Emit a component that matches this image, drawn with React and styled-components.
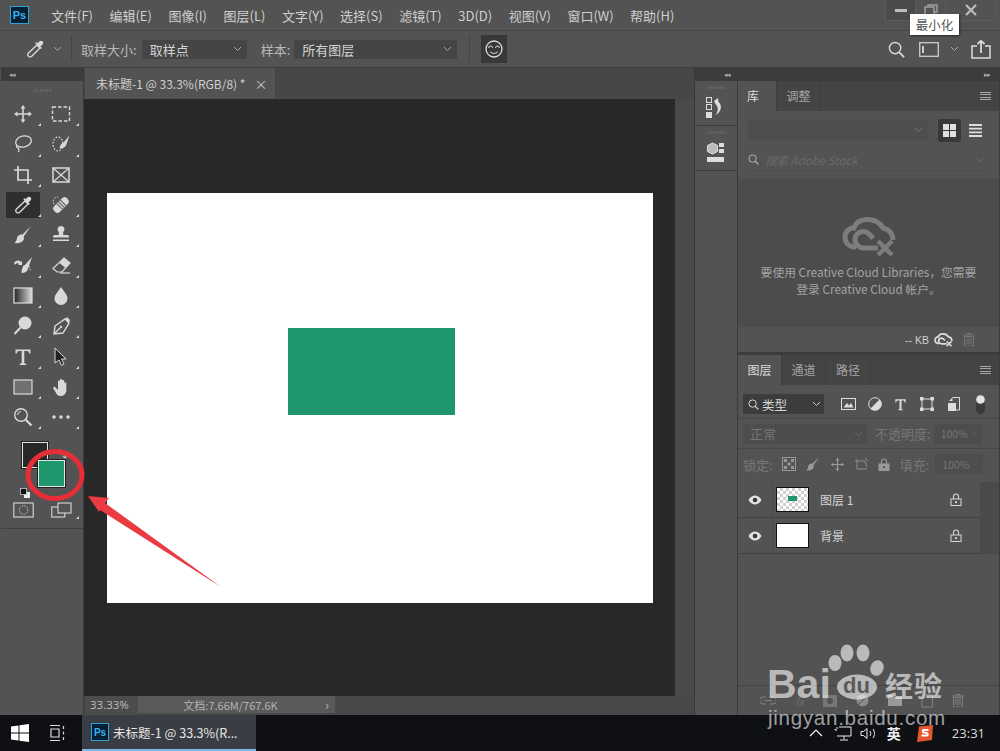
import React from 'react';
import styled, { createGlobalStyle } from 'styled-components';

const CJK = '"Noto Sans CJK SC", "Noto Sans", sans-serif';

const Global = createGlobalStyle`
  html, body { margin: 0; padding: 0; width: 1000px; height: 751px; overflow: hidden; background: #535353; }
  #root { width: 1000px; height: 751px; }
  * { box-sizing: border-box; }
`;

const Page = styled.div`
  position: relative; width: 1000px; height: 751px; display: flex; flex-direction: column;
  font-family: ${CJK}; color: #d6d6d6; overflow: hidden; background: #535353;
`;

/* ---------- title / menu ---------- */
const MenuBar = styled.header`
  height: 31px; flex: none; display: flex; align-items: center; background: #535353; padding-left: 10px;
  border-bottom: 1px solid #444;
`;
const PsLogo = styled.div`
  width: ${p => p.$s || 19}px; height: ${p => p.$s || 18}px; flex: none; display: flex; align-items: center; justify-content: center;
  background: #071f33; border: 1.5px solid #2fa3d8; color: #35b3ee; font: 700 ${p => p.$f || 11}px "Liberation Sans", sans-serif;
`;
const Menu = styled.nav`
  display: flex; gap: 16.5px; margin-left: 22px; font-size: 13px; color: #cfcfcf; white-space: nowrap;
`;
const WinControls = styled.div`
  margin-left: auto; margin-right: 4px; align-self: flex-start; display: flex; height: 21px;
`;
const WinBtn = styled.div`
  width: ${p => p.$w || 31}px; height: 21px; display: flex; align-items: center; justify-content: center;
  border: 1px solid #5c5c5c; border-top: 0; margin-left: -1px; background: ${p => p.$hover ? '#4a4a4a' : 'transparent'};
  border-radius: 0 0 3px 3px;
`;
const Tooltip = styled.div`
  position: absolute; left: 910px; top: 14px; width: 49px; height: 21px; background: #fff; color: #555;
  font-size: 12.5px; display: flex; align-items: center; justify-content: center; box-shadow: 1px 1px 2px rgba(0,0,0,.5);
`;

/* ---------- options ---------- */
const OptionsBar = styled.div`
  height: 37px; flex: none; display: flex; align-items: center; background: #535353; border-bottom: 1px solid #3e3e3e;
  font-size: 13px; color: #b9b9b9; padding-left: 25px;
`;
const Divider = styled.span`
  width: 1px; height: 26px; background: #444; margin: ${p => p.$m};
`;
const OptLabel = styled.span`margin: ${p => p.$m}; white-space: nowrap;`;
const OptSelect = styled.div`
  width: ${p => p.$w}px; height: 19px; margin: ${p => p.$m || 0}; background: #454545; color: #d4d4d4;
  display: flex; align-items: center; justify-content: space-between; padding: 0 5px 0 8px; font-size: 13px;
`;
const FaceBtn = styled.div`
  width: 26px; height: 28px; margin-left: 11px; background: #383838; display: flex; align-items: center; justify-content: center;
`;
const OptRight = styled.div`
  margin-left: auto; margin-right: 11px; display: flex; align-items: center; gap: 0;
`;

/* ---------- work area ---------- */
const Work = styled.div`flex: 1; display: flex; min-height: 0;`;

const ToolColumn = styled.aside`
  width: 84px; flex: none; background: #535353; border-right: 1px solid #3a3a3a; display: flex; flex-direction: column; padding-left: 1px;
`;
const StripHead = styled.div`
  height: 13px; flex: none; background: #3c3c3c; color: #aaa; font-size: 7px; line-height: 13px; letter-spacing: -1px;
  padding: ${p => p.$p || '0 0 0 8px'}; text-align: ${p => p.$a || 'left'};
  display: flex; justify-content: ${p => p.$j || 'flex-start'}; align-items: center;
`;
const Grip = styled.div`
  height: ${p => p.$h || 18}px; flex: none; display: flex; align-items: center; justify-content: center; gap: 1px;
  & > i { width: 2px; height: 3px; background: #626262; display: block; }
`;
const ToolGrid = styled.div`
  display: grid; grid-template-columns: 38px 38px; grid-auto-rows: 30.3px; padding-left: 3px; column-gap: 0;
`;
const Tool = styled.div`
  position: relative; display: flex; align-items: center; justify-content: center;
  margin: 2px 2px; border-radius: 1px;
  background: ${p => p.$active ? '#2f2f2f' : 'transparent'};
  &::after {
    content: ''; display: ${p => p.$plain ? 'none' : 'block'}; position: absolute; right: -1px; bottom: 1px; width: 0; height: 0;
    border-left: 3px solid transparent; border-bottom: 3px solid #d8d8d8;
  }
`;
const Swatches = styled.div`
  position: relative; height: 56px; margin-top: 7px; flex: none;
`;
const Swatch = styled.div`
  position: absolute; left: ${p => p.$x}px; top: ${p => p.$y}px; width: ${p => p.$s}px; height: ${p => p.$s}px;
  background: ${p => p.$c}; border: 1px solid #e4e4e4; outline: 1px solid #222;
`;
const SwapIcon = styled.div`position: absolute; left: 56px; top: 2px;`;
const MiniDefault = styled.div`position: absolute; left: 19px; top: 41px;`;
const BottomTools = styled.div`
  display: grid; grid-template-columns: 38px 38px; padding: 2px 0 6px 3px; border-bottom: 1px solid #414141; flex: none;
  height: 34px;
`;

const DocArea = styled.main`
  width: 610px; flex: none; display: flex; flex-direction: column; background: #484848;
`;
const TabStrip = styled.div`
  height: 31px; flex: none; background: #474747; display: flex; padding-left: 1px;
`;
const DocTab = styled.div`
  width: 190px; background: #535353; display: flex; align-items: center; padding-left: 11px; font-size: 12px; color: #cfcfcf; gap: 9px; white-space: nowrap;
  & > b { font-weight: 400; font-size: 13px; color: #c4c4c4; }
`;
const CanvasRow = styled.div`flex: 1; display: flex; min-height: 0;`;
const Pasteboard = styled.div`
  width: 591px; flex: none; background: #282828; display: flex; align-items: center; justify-content: center;
`;
const Sheet = styled.div`
  width: 546px; height: 410px; background: #fff; padding: 135px 0 0 181px;
`;
const GreenRect = styled.div`
  width: 167px; height: 87px; background: #1f976d;
`;
const VScroll = styled.div`flex: 1; background: #4a4a4a;`;
const StatusBar = styled.div`
  height: 19px; flex: none; display: flex; font-size: 11px; color: #bcbcbc; background: #484848; padding-left: 1px;
`;
const ZoomBox = styled.div`width: 53px; padding-left: 5px; line-height: 17px; font-size: 11.5px; font-family: "Open Sans", "Liberation Sans", sans-serif; background: #4c4c4c;`;
const DocInfo = styled.div`
  width: 197px; background: #5a5a5a; display: flex; align-items: center; position: relative; justify-content: center; padding-right: 12px; height: 17px;
  font-size: 11px; color: #b4b4b4;
`;
const InfoCaret = styled.span`position: absolute; right: 6px; top: -1px; font-size: 13px; color: #b5b5b5;`;

const DockStrip = styled.div`
  width: 44px; flex: none; background: #3c3c3c; display: flex; flex-direction: column; border-left: 1px solid #383838;
`;
const DockCell = styled.div`
  height: 44px; flex: none; background: #535353; margin-bottom: 1px; display: flex; flex-direction: column; align-items: center; border-right: 1px solid #3a3a3a;
`;
const DockRest = styled.div`flex: 1; background: #535353; border-right: 1px solid #3a3a3a;`;

const RightCol = styled.div`
  flex: 1; display: flex; flex-direction: column; background: #3c3c3c; min-width: 0; padding-right: 1px;
`;
const Panel = styled.section`
  background: #535353; display: flex; flex-direction: column; height: ${p => p.$h}px; flex: ${p => p.$h ? 'none' : 1}; margin-bottom: ${p => p.$mb || 0}px; position: relative;
`;
const TabsRow = styled.div`
  height: 30px; flex: none; background: #444; display: flex; align-items: center; font-size: 12px; color: #a4a4a4; position: relative;
`;
const PanelTab = styled.div`
  width: ${p => p.$w}px; height: 100%; display: flex; align-items: center; justify-content: center; padding: 0 ${p => p.$pr || 0}px 2px 0;
  background: ${p => p.$on ? '#535353' : 'transparent'}; color: ${p => p.$on ? '#dcdcdc' : '#a4a4a4'};
  border-right: 1px solid #3f3f3f;
`;
const PanelMenu = styled.div`
  margin-left: auto; margin-right: 8px; width: 11px; height: 8px;
  background: repeating-linear-gradient(#a8a8a8 0 1px, transparent 1px 2.3px);
`;
const LibTop = styled.div`display: flex; align-items: center; height: 31px; padding: 7px 0 0 10px; flex: none;`;
const LibSelect = styled.div`
  width: 180px; height: 20px; background: #4e4e4e; border-radius: 2px; display: flex; align-items: center; justify-content: flex-end; padding-right: 5px;
`;
const ViewBtn = styled.div`
  width: 23px; height: 23px; margin-left: 10px; background: #383838; border-radius: 2px; display: flex; align-items: center; justify-content: center;
`;
const ListBtn = styled.div`margin-left: 8px; display: flex;`;
const LibSearch = styled.div`
  margin: 7px 10px 0 10px; height: 22px; border-bottom: 1px solid #4c4c4c; display: flex; align-items: center; gap: 6px; flex: none;
  font-size: 11.5px; font-style: italic; color: #6a6a6a; padding-right: 4px;
`;
const LibEmpty = styled.div`
  flex: 1; display: flex; flex-direction: column; align-items: center; padding-top: 38px; font-size: 11.8px; line-height: 16.5px; color: #a3a3a3; text-align: center; background: #4c4c4c;
  margin: 8px 0 0;
`;
const EmptyLine = styled.div`margin-top: ${p => p.$mt || 0}px;`;
const LibFoot = styled.div`
  height: 25px; flex: none; display: flex; align-items: center; justify-content: flex-end; gap: 5px; padding-right: 24px; font-size: 10.5px; color: #d0d0d0; background: #535353;
  font-family: "Liberation Sans", sans-serif;
`;
const FilterRow = styled.div`
  display: flex; align-items: flex-start; height: 33px; padding: 9px 0 0 5px; flex: none;
`;
const KindSelect = styled.div`
  width: 81px; height: 20px; background: #3c3c3c; display: flex; align-items: center; gap: 3px; padding: 0 3px 0 5px; font-size: 12.5px; color: #d6d6d6; justify-content: flex-start;
`;
const FilterIcons = styled.div`display: flex; margin-left: 11px; align-items: center; height: 20px;`;
const FilterSlot = styled.div`width: 26.4px; display: flex; justify-content: center; align-items: center;`;
const Rule = styled.div`height: 1px; background: #484848; flex: none;`;
const ModeRow = styled.div`
  display: flex; align-items: center; height: 29px; padding-left: 5px; font-size: 13px; color: #767676; flex: none;
`;
const DimSelect = styled.div`
  width: ${p => p.$w}px; height: 20px; background: #4d4d4d; display: flex; align-items: center; justify-content: space-between; padding: 0 4px 0 7px; margin-left: ${p => p.$ml || 0}px; font-size: ${p => p.$f || 13}px; flex: none;
`;
const LockRow = styled(ModeRow)`height: 33px; padding-bottom: 3px;`;
const LockIcons = styled.div`display: flex; gap: 9px; margin-left: 9px; align-items: center;`;
const LayerList = styled.div`flex: 1; display: flex; flex-direction: column; background: #535353;`;
const LayerGroup = styled.div`background: #4b4b4b; flex: none;`;
const LayerRow = styled.div`
  height: 36px; flex: none; width: 242px; display: flex; align-items: center; background: #535353; border-bottom: 1px solid #434343;
  font-size: 12px; color: #d4d4d4; position: relative;
`;
const EyeCell = styled.div`
  width: 35px; height: 100%; display: flex; align-items: center; justify-content: center; border-right: 1px solid #484848;
`;
const Thumb = styled.div`
  width: 33px; height: 25px; margin-left: 3px; border: 1px solid #111; display: flex; align-items: center; justify-content: center;
  background: ${p => p.$check ? 'repeating-conic-gradient(#d0d0d0 0 25%, #fff 0 50%) 0 0 / 6px 6px' : '#fff'};
`;
const ThumbMark = styled.div`width: 9px; height: 5px; background: #1f976d; margin-top: -2px;`;
const LayerName = styled.div`margin-left: 11px;`;
const LayerLock = styled.div`margin-left: auto; margin-right: 18px; display: flex;`;
const LayersFoot = styled.div`
  height: 30px; flex: none; background: #535353; border-top: 1px solid #444; display: flex; align-items: center; justify-content: flex-end; padding-right: 35px; gap: 19px; color: #6e6e6e; font-size: 11px;
`;

/* ---------- taskbar ---------- */
const Taskbar = styled.footer`
  height: 36px; flex: none; background: #0e1014; display: flex; align-items: center; position: relative;
`;
const WinStart = styled.div`width: 40px; display: flex; justify-content: center;`;
const TaskView = styled.div`width: 36px; display: flex; justify-content: center; margin-right: 6px;`;
const TaskApp = styled.div`
  width: 174px; height: 36px; background: #3a3e44; border-bottom: 2px solid #76b9ed; display: flex; align-items: center; gap: 4px; padding-left: 9px; font-size: 12.5px; color: #e6e6e6; white-space: nowrap;
`;
const Tray = styled.div`
  margin-left: auto; display: flex; align-items: center; color: #e4e4e4; height: 100%; padding-right: 15px;
`;
const TrayGlyph = styled.span`font-size: ${p => p.$f || 13}px; margin: ${p => p.$m || 0}; color: #eee; font-weight: ${p => p.$b || 400};`;
const Clock = styled.span`font: 13px "Open Sans", "Liberation Sans", sans-serif; color: #ddd; margin-left: 18px;`;

/* ---------- overlays ---------- */
const Annotation = styled.svg`position: absolute; left: 0; top: 0; width: 1000px; height: 751px; pointer-events: none;`;
const Watermark = styled.div`
  position: absolute; left: 765px; top: 640px; width: 190px; height: 95px; color: rgba(255,255,255,.6); pointer-events: none;
`;
const WmBai = styled.span`position: absolute; left: 2px; top: 22px; font: 700 41px/44px "Liberation Sans", sans-serif;`;
const WmJing = styled.span`position: absolute; left: 120px; top: 25px; font: 700 28px/40px ${CJK}; white-space: nowrap; letter-spacing: 1px;`;
const WmUrl = styled.span`position: absolute; left: 3px; top: 65px; font: 400 20.6px/26px "Liberation Sans", sans-serif; letter-spacing: .7px; white-space: nowrap;`;
const WmPaw = styled.svg`position: absolute; left: 0; top: 0;`;
const WmDu = styled.span`position: absolute; left: 78px; top: 35px; font: 700 22px/22px "Liberation Sans", sans-serif; color: #5a5a5a;`;

/* ---------- icons ---------- */
const ic = '#d9d9d9';
const Svg = ({ s = 20, w, h, vb, children, ...rest }) => (
  <svg width={w || s} height={h || s} viewBox={vb || `0 0 ${w || s} ${h || s}`} fill="none" {...rest}>{children}</svg>
);
const Chevron = ({ c = '#a8a8a8', w = 9 }) => (
  <Svg w={w} h={6} vb="0 0 9 6"><path d="M1 1l3.5 3.5L8 1" stroke={c} strokeWidth="1" /></Svg>
);
const Dropper = ({ s = 20 }) => (
  <Svg s={s} vb="0 0 20 20">
    <path d="M12 6l3 3-8 8c-1 1-2.5 1-3.5.2S2.5 15 3.5 14z" stroke={ic} strokeWidth="1.4" />
    <path d="M10.5 4.5l5.5 5.5 1-1-1.5-1.5 2-2c1-1 1-2.3 0-3.2s-2.2-.8-3 0l-2 2-1.5-1.5z" fill={ic} />
  </Svg>
);
const IconMove = () => (
  <Svg><path d="M10 1l2.5 3.5h-1.7V9.2h4.7V7.5L19 10l-3.5 2.5v-1.7h-4.7v4.7h1.7L10 19l-2.5-3.5h1.7v-4.7H4.5v1.7L1 10l3.5-2.5v1.7h4.7V4.5H7.5z" fill={ic} /></Svg>
);
const IconMarquee = () => (
  <Svg><rect x="1.5" y="3" width="17" height="14" stroke={ic} strokeWidth="1.4" strokeDasharray="3.5 2" /></Svg>
);
const IconLasso = () => (
  <Svg><ellipse cx="10.5" cy="7.5" rx="8" ry="5.5" transform="rotate(-15 10.5 7.5)" stroke={ic} strokeWidth="1.3" /><path d="M4 11c-1 2 0 3 1 3s1 2 .5 4" stroke={ic} strokeWidth="1.3" /></Svg>
);
const IconQuick = () => (
  <Svg><ellipse cx="7" cy="10" rx="5" ry="7" stroke={ic} strokeWidth="1.2" strokeDasharray="1.6 1.6" /><path d="M18.5 1.5l-6 7c-2 .5-3.5 2.5-4 6 3 0 6-1 7-4.5z" fill={ic} /></Svg>
);
const IconCrop = () => (
  <Svg><path d="M5 1v14h14M1 5h14v14" stroke={ic} strokeWidth="1.7" /></Svg>
);
const IconFrame = () => (
  <Svg><rect x="2" y="3" width="16" height="14" stroke={ic} strokeWidth="1.5" /><path d="M2 3l16 14M18 3L2 17" stroke={ic} strokeWidth="1.2" /></Svg>
);
const IconHeal = () => (
  <Svg><g transform="rotate(-45 10 10)"><rect x="1" y="6" width="18" height="8" rx="3.5" fill={ic} /><path d="M8 6v8M10.5 6v8M13 6v8" stroke="#535353" strokeWidth="1" /></g><path d="M3 9C1 6 3 2 7 2" stroke={ic} strokeDasharray="1.5 1.5" /></Svg>
);
const IconBrush = () => (
  <Svg><path d="M18 1L9.5 9.5c-2.5-.5-5 1-5.5 3.5-.3 2-1 3.5-2.5 5 4 .5 8-.5 9-3 .6-1.5.5-2.5.2-3.5z" fill={ic} /></Svg>
);
const IconStamp = () => (
  <Svg><path d="M10 1a3.5 3.5 0 0 1 2.2 6.2V10h4.300c1 0 1.500 1 1.500 2.500H2C2 11 2.500 10 3.500 10h4.300V7.200A3.500 3.500 0 0 1 10 1zM2 14.500h16V16H2z" fill={ic} /></Svg>
);
const IconHist = () => (
  <Svg><path d="M19 1l-7 8c-2 .5-3 2.5-3.5 8 3.5 0 6-1.5 6.5-4.5z" fill={ic} /><path d="M1 7c2-3 5-3 7-1l1-1v4H5l1-1C5 7 3 7 2 9z" fill={ic} /><path d="M16 10l1.5 5" stroke={ic} strokeDasharray="1.5 1.5" /></Svg>
);
const IconEraser = () => (
  <Svg><path d="M13 2l6 5-8 9H6l-4-3.5z" stroke={ic} strokeWidth="1.2" /><path d="M13 2l6 5-4.5 5-6-5z" fill={ic} /><path d="M9 17h10" stroke={ic} strokeWidth="1.2" /></Svg>
);
const IconGradient = () => (
  <svg width="20" height="18" viewBox="0 0 20 18"><defs><linearGradient id="gr"><stop offset="0" stopColor="#222" /><stop offset="1" stopColor="#ddd" /></linearGradient></defs><rect x="1" y="1" width="18" height="15" fill="url(#gr)" stroke="#ddd" strokeWidth="1.2" /></svg>
);
const IconDrop = () => (
  <Svg><path d="M10 1c3 4.5 6.5 8 6.5 11.5a6.5 6.5 0 0 1-13 0C3.5 9 7 5.5 10 1z" fill={ic} /></Svg>
);
const IconDodge = () => (
  <Svg><circle cx="12" cy="7" r="6.5" fill={ic} /><path d="M7.5 11.500L1.500 18" stroke={ic} strokeWidth="2" /></Svg>
);
const IconPen = () => (
  <Svg><path d="M4 10L14 3l4 4-6 10-9 1zM3 18l6-6" stroke={ic} strokeWidth="1.4" /><path d="M14 3l2-2 3 3-1 3z" fill={ic} /><circle cx="10" cy="11" r="1.2" fill={ic} /></Svg>
);
const IconT = () => (
  <Svg><path d="M2.5 2.5h15v4h-1.200c-.4-1.700-1-2.500-2.300-2.500h-2.700v11.500c0 1 .5 1.200 2 1.300V18H6.700v-1.200c1.500-.1 2-.3 2-1.300V4H6c-1.300 0-1.900.8-2.300 2.500H2.500z" fill={ic} /></Svg>
);
const IconArrow = () => (
  <Svg><path d="M4 1l11 11h-4.5l2.500 5-2.500 1.300-2.500-5.300L4 16z" fill="#222" stroke={ic} strokeWidth="1" /></Svg>
);
const IconRect = () => (
  <Svg h={16} w={20}><rect x="1" y="1" width="18" height="14" fill="#707070" stroke={ic} strokeWidth="1.2" /></Svg>
);
const IconHand = () => (
  <Svg><path d="M4 10l3 3V4.500c0-1.500 2-1.500 2 0V9V3c0-1.500 2.200-1.500 2.200 0v6-5c0-1.500 2.100-1.500 2.100 0v6l0-3.500c0-1.500 2-1.500 2 0V13c0 3.500-2.300 6-5.300 6-3 0-4-1-5.500-4L2.500 12c-.8-1.500.5-3 1.500-2z" fill={ic} /></Svg>
);
const IconZoom = () => (
  <Svg><circle cx="8" cy="8" r="6.3" stroke={ic} strokeWidth="1.4" /><path d="M12.5 12.5L18.5 18.5" stroke={ic} strokeWidth="2.2" /><path d="M4.5 8A3.5 3.5 0 0 1 8 4.5" stroke={ic} /></Svg>
);
const IconDots = () => (
  <Svg h={6} w={20}><circle cx="3" cy="3" r="1.8" fill={ic} /><circle cx="10" cy="3" r="1.8" fill={ic} /><circle cx="17" cy="3" r="1.8" fill={ic} /></Svg>
);
const IconQuickMask = () => (
  <Svg h={16} w={21}><rect x=".8" y="1" width="19.4" height="14" stroke={ic} strokeWidth="1.1" /><circle cx="10.5" cy="8" r="4.3" stroke={ic} strokeDasharray="1.3 1.3" /></Svg>
);
const IconScreen = () => (
  <Svg h={16} w={21}><rect x=".8" y="5" width="13" height="10" stroke={ic} strokeWidth="1.1" /><rect x="7" y="1" width="13" height="10" fill="#535353" stroke={ic} strokeWidth="1.1" /></Svg>
);
const Search = ({ s = 18, c = ic, w = 1.5 }) => (
  <Svg s={s} vb="0 0 18 18"><circle cx="7.5" cy="7.5" r="6" stroke={c} strokeWidth={w} /><path d="M12 12l5 5" stroke={c} strokeWidth={w + .5} /></Svg>
);
const CloudOff = ({ w = 54, h = 40, c = '#7d7d7d', t = 5 }) => (
  <svg width={w} height={h} viewBox="0 0 54 40" fill="none">
    <path d="M14 30C6 30 3 25 3 20c0-6 5-9.500 9-9 2-6 7-8.500 13-8.500 8 0 13 3 16 8.500 6 1 10 6 10 12" stroke={c} strokeWidth={t} />
    <path d="M36 31H22c-5 0-9-4-9-8.500s4-8 8-8c5 0 8 4 10 7" stroke={c} strokeWidth={t} />
    <path d="M36 24l14 14M50 24L36 38" stroke={c} strokeWidth="4.5" />
  </svg>
);
const Eye = () => (
  <Svg w={14} h={10} vb="0 0 14 10"><path d="M.5 5C2.500 1.500 5 .5 7 .5S11.500 1.500 13.500 5C11.500 8.500 9 9.500 7 9.500S2.500 8.500.5 5z" fill="#e2e2e2" /><circle cx="7" cy="5" r="2.3" fill="#3a3a3a" /></Svg>
);
const Lock = ({ s = 12, c = '#d8d8d8', solid }) => (
  <Svg w={s} h={s + 1} vb="0 0 12 13">
    <path d="M3.5 6V3.5a2.5 2.5 0 0 1 5 0V6" stroke={c} strokeWidth="1.1" />
    <rect x="1" y="6" width="10" height="6.5" stroke={c} fill={solid ? c : 'none'} />
    <circle cx="6" cy="9.2" r="1.1" fill={solid ? '#535353' : c} />
  </Svg>
);

const GripDots = ({ h }) => <Grip $h={h}><i /><i /><i /><i /><i /><i /></Grip>;

const tools = [
  [IconMove, IconMarquee], [IconLasso, IconQuick], [IconCrop, IconFrame], [Dropper, IconHeal],
  [IconBrush, IconStamp], [IconHist, IconEraser], [IconGradient, IconDrop], [IconDodge, IconPen],
  [IconT, IconArrow], [IconRect, IconHand], [IconZoom, IconDots],
];
const menus = ['文件(F)', '编辑(E)', '图像(I)', '图层(L)', '文字(Y)', '选择(S)', '滤镜(T)', '3D(D)', '视图(V)', '窗口(W)', '帮助(H)'];

export default function App() {
  return (
    <Page>
      <Global />
      <MenuBar>
        <PsLogo>Ps</PsLogo>
        <Menu>{menus.map(m => <span key={m}>{m}</span>)}</Menu>
        <WinControls>
          <WinBtn $hover><Svg w={12} h={3} vb="0 0 12 3"><rect width="12" height="3" fill="#bdbdbd" /></Svg></WinBtn>
          <WinBtn><Svg w={14} h={12} vb="0 0 14 12"><path d="M4 3V1h9v7h-3M1 3h9v8H1z" stroke="#9e9e9e" strokeWidth="1.5" /></Svg></WinBtn>
          <WinBtn $w={51}><Svg s={12}><path d="M1 1l10 10M11 1L1 11" stroke="#bdbdbd" strokeWidth="2.2" /></Svg></WinBtn>
        </WinControls>
      </MenuBar>

      <OptionsBar>
        <Dropper s={20} />
        <span style={{ width: 8 }} />
        <Chevron />
        <Divider $m="0 0 0 9px" />
        <OptLabel $m="0 0 0 9px">取样大小:</OptLabel>
        <OptSelect $w={105} $m="0 0 0 5px">取样点<Chevron /></OptSelect>
        <OptLabel $m="0 0 0 14px">样本:</OptLabel>
        <OptSelect $w={163} $m="0 0 0 4px">所有图层<Chevron /></OptSelect>
        <Divider $m="0 0 0 12px" />
        <FaceBtn>
          <Svg s={18} vb="0 0 18 18"><circle cx="9" cy="9" r="8" stroke="#ddd" strokeWidth="1.3" /><path d="M3.5 8a2 2 0 0 1 4 0M10.5 8a2 2 0 0 1 4 0M5 11.5c2 2.5 6 2.5 8 0" stroke="#ddd" /></Svg>
        </FaceBtn>
        <OptRight>
          <Search s={17} />
          <Svg w={20} h={15} vb="0 0 20 15" style={{ marginLeft: 14 }}><rect x=".7" y=".7" width="18.6" height="13.6" stroke="#ccc" strokeWidth="1.3" /><rect x="3" y="4" width="2" height="7" fill="#ccc" /></Svg>
          <span style={{ width: 11 }} />
          <Chevron />
          <Svg w={20} h={19} vb="0 0 20 19" style={{ marginLeft: 12, marginRight: -2 }}><path d="M6 6H1v12h18V6h-5" stroke="#ddd" strokeWidth="1.5" /><path d="M10 13V1M6.5 4L10 .8 13.5 4" stroke="#ddd" strokeWidth="1.7" /></Svg>
        </OptRight>
      </OptionsBar>

      <Work>
        <ToolColumn>
          <StripHead>◂◂</StripHead>
          <GripDots h={18} />
          <ToolGrid>
            {tools.flat().map((I, i) => (
              <Tool key={i} $active={i === 6} $plain={i === 5}><I /></Tool>
            ))}
          </ToolGrid>
          <Swatches>
            <Swatch $x={21} $y={3} $s={26} $c="#282828" />
            <Swatch $x={37} $y={21} $s={27} $c="#1f976d" />
            <SwapIcon><Svg s={12}><path d="M1 4h7v6M1 4l2.5-2.5M1 4l2.5 2.5M8 10L5.5 8M8 10l2.5-2" stroke="#ddd" /></Svg></SwapIcon>
            <MiniDefault><Svg s={11}><rect x="4" y="4" width="6" height="6" fill="#eee" /><rect x=".5" y=".5" width="6" height="6" fill="#111" stroke="#ddd" strokeWidth=".7" /></Svg></MiniDefault>
          </Swatches>
          <BottomTools>
            <Tool $plain><IconQuickMask /></Tool>
            <Tool><IconScreen /></Tool>
          </BottomTools>
        </ToolColumn>

        <DocArea>
          <TabStrip>
            <DocTab>未标题-1 @ 33.3%(RGB/8) * <b>×</b></DocTab>
          </TabStrip>
          <CanvasRow>
            <Pasteboard>
              <Sheet><GreenRect /></Sheet>
            </Pasteboard>
            <VScroll />
          </CanvasRow>
          <StatusBar>
            <ZoomBox>33.33%</ZoomBox>
            <DocInfo>文档:7.66M/767.6K<InfoCaret>›</InfoCaret></DocInfo>
          </StatusBar>
        </DocArea>

        <DockStrip>
          <StripHead $j="flex-end" $p="0 8px 0 0">◂◂</StripHead>
          <DockCell>
            <GripDots h={13} />
            <Svg w={20} h={21} vb="0 0 20 21" style={{ marginTop: 3 }}>
              <rect x=".5" y=".5" width="5" height="5" stroke="#ddd" /><rect x=".5" y="7.5" width="5" height="5" stroke="#ddd" /><rect y="15" width="6" height="6" fill="#ddd" />
              <path d="M8 4l4-3 .5 4c4 3 3 10-3 13 3-4 3-8 0-11z" fill="#ddd" />
            </Svg>
          </DockCell>
          <DockCell>
            <GripDots h={13} />
            <Svg w={18} h={22} vb="0 0 18 22" style={{ marginTop: 3 }}>
              <path d="M5.5 1l5 2.5v6L5.5 12 .5 9.500v-6z" fill="#bbb" stroke="#ddd" />
              <rect x="12" y="1" width="5" height="4" fill="#ddd" /><rect x="12" y="7" width="5" height="4" fill="#ddd" />
              <rect x="0" y="15" width="17" height="5" fill="#ddd" />
            </Svg>
          </DockCell>
          <DockRest />
        </DockStrip>

        <RightCol>
          <StripHead $j="flex-end" $p="0 9px 0 0">▸▸</StripHead>
          <Panel $h={271} $mb={3}>
            <TabsRow>
              <PanelTab $on $w={39} $pr={8}>库</PanelTab>
              <PanelTab $w={44}>调整</PanelTab>
              <PanelMenu />
            </TabsRow>
            <LibTop>
              <LibSelect><Chevron c="#777" /></LibSelect>
              <ViewBtn><Svg s={13}><path d="M0 0h6v6H0zM7 0h6v6H7zM0 7h6v6H0zM7 7h6v6H7z" fill="#e0e0e0" /></Svg></ViewBtn>
              <ListBtn><Svg w={13} h={13} vb="0 0 13 13"><path d="M0 1h13M0 4.700h13M0 8.300h13M0 12h13" stroke="#ddd" strokeWidth="1.8" /></Svg></ListBtn>
            </LibTop>
            <LibSearch>
              <Search s={11} c="#bbb" />
              <span>搜索 Adobe Stock</span>
              <span style={{ marginLeft: 'auto', display: 'flex' }}><Chevron c="#6a6a6a" /></span>
            </LibSearch>
            <LibEmpty>
              <CloudOff />
              <EmptyLine $mt={7}>要使用 Creative Cloud Libraries，您需要</EmptyLine>
              <EmptyLine>登录 Creative Cloud 帐户。</EmptyLine>
            </LibEmpty>
            <LibFoot>
              <span>-- KB</span>
              <CloudOff w={19} h={14} c="#ddd" />
              <Svg w={12} h={13} vb="0 0 12 13" style={{ marginLeft: 5 }}><path d="M0 2h12M4 2V.5h4V2M1.5 3.5h9V13h-9zM4 5v6M6 5v6M8 5v6" stroke="#757575" /></Svg>
            </LibFoot>
          </Panel>

          <Panel>
            <TabsRow>
              <PanelTab $on $w={44}>图层</PanelTab>
              <PanelTab $w={44}>通道</PanelTab>
              <PanelTab $w={45}>路径</PanelTab>
              <PanelMenu />
            </TabsRow>
            <FilterRow>
              <KindSelect>
                <Search s={11} c="#e0e0e0" />
                <span>类型</span>
                <span style={{ marginLeft: 'auto', display: 'flex' }}><Chevron c="#ccc" /></span>
              </KindSelect>
              <FilterIcons>
                <FilterSlot><Svg w={15} h={12} vb="0 0 15 12"><rect x=".5" y=".5" width="14" height="11" stroke="#ddd" /><path d="M2.5 9.5L6 5l2 2.5L10 5l2.5 4.5z" fill="#ddd" /></Svg></FilterSlot>
                <FilterSlot><Svg s={14}><circle cx="7" cy="7" r="6.3" stroke="#ddd" /><path d="M11.5 2.5a6.3 6.3 0 0 1-9 9z" fill="#ddd" /></Svg></FilterSlot>
                <FilterSlot><Svg s={13} vb="0 0 20 20"><path d="M2 2h16v5h-1.500c-.4-2-1-3-2.500-3h-2.500v12.500c0 .8.500 1 2 1.200V19H6.500v-1.300c1.500-.2 2-.4 2-1.200V4H6C4.500 4 3.900 5 3.500 7H2z" fill="#ddd" /></Svg></FilterSlot>
                <FilterSlot><Svg s={14}><rect x="2" y="2" width="10" height="10" stroke="#ddd" /><path d="M0 0h3.5v3.5H0zM10.5 0H14v3.5h-3.5zM0 10.5h3.5V14H0zM10.5 10.5H14V14h-3.5z" fill="#ddd" /></Svg></FilterSlot>
                <FilterSlot><Svg w={12} h={14} vb="0 0 12 14"><path d="M4.5.5H11.5V13H8" stroke="#ddd" /><rect y="6" width="8" height="8" fill="#ddd" /><path d="M4.5.5L1 4h3.5z" fill="#ddd" /></Svg></FilterSlot>
                <FilterSlot><Svg w={9} h={19} vb="0 0 9 19"><rect y="6" width="9" height="13" rx="4.5" fill="#3a3a3a" /><circle cx="4.5" cy="4.5" r="4.3" fill="#e4e4e4" /></Svg></FilterSlot>
              </FilterIcons>
            </FilterRow>
            <Rule />
            <ModeRow>
              <DimSelect $w={124}>正常<Chevron c="#666" /></DimSelect>
              <span style={{ marginLeft: 8 }}>不透明度:</span>
              <DimSelect $w={48} $f={10.5} $ml={3}>100%<Chevron c="#666" w={7} /></DimSelect>
            </ModeRow>
            <Rule />
            <LockRow>
              锁定:
              <LockIcons>
                <Svg s={14}><rect x=".5" y=".5" width="13" height="13" stroke="#999" /><path d="M2 2h3v3H2zM9 2h3v3H9zM5.5 5.5h3v3h-3zM2 9h3v3H2zM9 9h3v3H9z" fill="#999" /></Svg>
                <Svg s={16} vb="0 0 20 20"><path d="M18 1L9.5 9.5c-2.5-.5-5 1-5.5 3.5-.3 2-1 3.5-2.5 5 4 .5 8-.5 9-3 .6-1.5.5-2.5.2-3.5z" fill="#9a9a9a" /></Svg>
                <Svg s={15} vb="0 0 20 20"><path d="M10 1l2.5 3.5h-1.7V9.2h4.700V7.500L19 10l-3.500 2.500v-1.700h-4.700v4.700h1.700L10 19l-2.500-3.500h1.700v-4.700H4.500v1.700L1 10l3.500-2.500v1.700h4.700V4.500H7.500z" fill="#9a9a9a" /></Svg>
                <Svg s={15}><path d="M3 2v10h10M1 4h10l2 6" stroke="#8f8f8f" /><path d="M11 1l3 3" stroke="#8f8f8f" /></Svg>
                <Lock s={12} c="#999" solid />
              </LockIcons>
              <span style={{ marginLeft: 10 }}>填充:</span>
              <DimSelect $w={48} $f={10.5} $ml={6}>100%<Chevron c="#666" w={7} /></DimSelect>
            </LockRow>
            <LayerList>
              <LayerGroup>
                <LayerRow>
                  <EyeCell><Eye /></EyeCell>
                  <Thumb $check><ThumbMark /></Thumb>
                  <LayerName>图层 1</LayerName>
                  <LayerLock><Lock /></LayerLock>
                </LayerRow>
                <LayerRow>
                  <EyeCell><Eye /></EyeCell>
                  <Thumb />
                  <LayerName>背景</LayerName>
                  <LayerLock><Lock /></LayerLock>
                </LayerRow>
              </LayerGroup>
            </LayerList>
            <LayersFoot>
              <Svg w={16} h={9} vb="0 0 16 9"><path d="M6 1H3a3.5 3.5 0 0 0 0 7h3M10 1h3a3.5 3.5 0 0 1 0 7h-3M4 4.5h8" stroke="#808080" /></Svg>
              <span style={{ fontStyle: 'italic' }}>fx</span>
              <Svg w={14} h={12} vb="0 0 14 12"><rect width="14" height="12" fill="#777" /><circle cx="7" cy="6" r="3" fill="#535353" /></Svg>
              <Svg s={13}><circle cx="6.5" cy="6.5" r="6" fill="#8a8a8a" /><path d="M11 2L2 11" stroke="#535353" /></Svg>
              <Svg w={14} h={11} vb="0 0 14 11"><path d="M0 0h5l1 2h8v9H0z" fill="#9a9a9a" /></Svg>
              <Svg w={12} h={14} vb="0 0 12 14"><path d="M4 .5h7.5V13H1V4z" stroke="#808080" /></Svg>
              <Svg w={12} h={13} vb="0 0 12 13"><path d="M0 2h12M4 2V.5h4V2M1.5 3.5h9V13h-9zM4 5v6M6 5v6M8 5v6" stroke="#808080" /></Svg>
            </LayersFoot>
          </Panel>
        </RightCol>
      </Work>

      <Taskbar>
        <WinStart>
          <Svg s={18} vb="0 0 18 18"><path d="M0 2.5L7.5 1.5V8.500H0zM8.500 1.300L18 0V8.500H8.500zM0 9.500h7.500v7L0 15.500zM8.500 9.500H18V18l-9.500-1.300z" fill="#fff" /></Svg>
        </WinStart>
        <TaskView>
          <Svg w={18} h={16} vb="0 0 18 16"><path d="M1 .5h10M1 15.5h10M2 4h8v8H2zM14.5 1v3M14.5 6.5v3M14.5 12v3" stroke="#ddd" strokeWidth="1.2" /></Svg>
        </TaskView>
        <TaskApp><PsLogo $s={18} $f={10}>Ps</PsLogo>未标题-1 @ 33.3%(R...</TaskApp>
        <Tray>
          <Svg w={14} h={8} vb="0 0 14 8"><path d="M1 7l6-6 6 6" stroke="#eee" strokeWidth="1.2" /></Svg>
          <Svg w={18} h={15} vb="0 0 18 15" style={{ marginLeft: 11 }}><path d="M3 1v2M1 3v1h2M5 1h12v9H3M10 10v3M6 14h8" stroke="#eee" /></Svg>
          <Svg w={17} h={13} vb="0 0 17 13" style={{ marginLeft: 8 }}><path d="M1 4.5h2.5L7 1.5v10L3.5 8.5H1zM10 4c1 1.500 1 3.500 0 5M13 2c2 2.500 2 6.500 0 9" stroke="#eee" /></Svg>
          <TrayGlyph $f={14} $b={700} $m="0 0 0 10px">英</TrayGlyph>
          <Svg w={18} h={17} vb="0 0 18 17" style={{ marginLeft: 15 }}><path d="M3 1.5L17 0l-1 15L1 17z" fill="#e4572e" /><path d="M12.5 5H7.5c-1 0-1 2 0 2.300l3.500.8c1 .3 1 2.400 0 2.400H5.500" stroke="#fff" strokeWidth="2" fill="none" /></Svg>
          <Clock>23:31</Clock>
        </Tray>
      </Taskbar>

      <Tooltip>最小化</Tooltip>

      <Annotation viewBox="0 0 1000 751">
        <ellipse cx="55" cy="475" rx="27" ry="23.5" fill="none" stroke="#e62e38" strokeWidth="5" />
        <path d="M88 496L109 498 105 503 221 587 100 510 99 512z" fill="#ea3a42" />
      </Annotation>

      <Watermark>
        <WmPaw width="120" height="80" viewBox="0 0 120 80">
          <ellipse cx="70" cy="23" rx="6.5" ry="8" fill="rgba(255,255,255,.6)" />
          <ellipse cx="82" cy="13" rx="6.5" ry="8.5" fill="rgba(255,255,255,.6)" />
          <ellipse cx="98" cy="13" rx="6.5" ry="8.5" fill="rgba(255,255,255,.6)" />
          <ellipse cx="112" cy="28" rx="6.5" ry="8" transform="rotate(20 112 28)" fill="rgba(255,255,255,.6)" />
          <ellipse cx="92" cy="47" rx="20" ry="12.5" fill="rgba(255,255,255,.6)" />
        </WmPaw>
        <WmBai>Bai</WmBai>
        <WmDu>du</WmDu>
        <WmJing>经验</WmJing>
        <WmUrl>jingyan.baidu.com</WmUrl>
      </Watermark>
    </Page>
  );
}
